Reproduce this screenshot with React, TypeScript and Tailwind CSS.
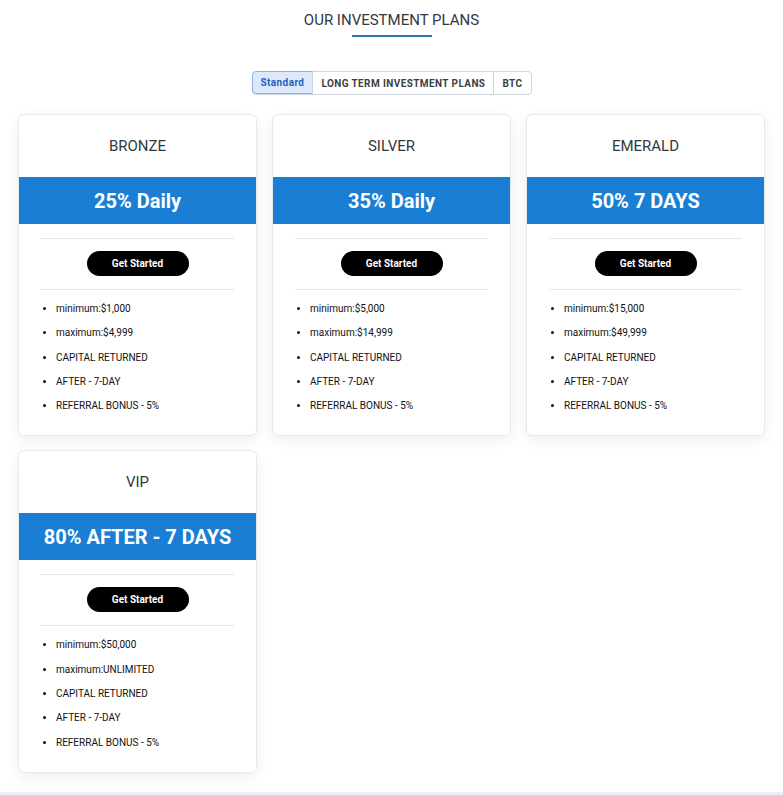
import { useState } from "react";

interface Plan {
  name: string;
  rate: string;
  min: string;
  max: string;
}

const plans: Plan[] = [
  { name: "BRONZE", rate: "25% Daily", min: "$1,000", max: "$4,999" },
  { name: "SILVER", rate: "35% Daily", min: "$5,000", max: "$14,999" },
  { name: "EMERALD", rate: "50% 7 DAYS", min: "$15,000", max: "$49,999" },
  { name: "VIP", rate: "80% AFTER - 7 DAYS", min: "$50,000", max: "UNLIMITED" },
];

const tabs = ["Standard", "LONG TERM INVESTMENT PLANS", "BTC"];

function PlanCard({ plan }: { plan: Plan }) {
  return (
    <div className="rounded-md border border-[#e6e9ee] bg-white shadow-[0_4px_14px_rgba(0,0,0,0.07)] pb-[17px]">
      <h3 className="h-[62px] flex items-center justify-center text-[15px] text-[#333840]">
        {plan.name}
      </h3>
      <div className="h-[47px] bg-[#1a7fd4] flex items-center justify-center text-white text-[20px] font-bold">
        {plan.rate}
      </div>
      <div className="mx-[22px] mt-[14px] border-t border-[#e4e6ea]" />
      <div className="flex justify-center pt-[12px] pb-[13px]">
        <button className="w-[102px] h-[25px] rounded-full bg-black text-white text-[10px] font-bold">
          Get Started
        </button>
      </div>
      <div className="mx-[22px] border-t border-[#e4e6ea]" />
      <ul className="list-disc pl-[37px] pt-[7px] text-[10px] text-[#111] leading-[24.3px]">
        <li>minimum:{plan.min}</li>
        <li>maximum:{plan.max}</li>
        <li>CAPITAL RETURNED</li>
        <li>AFTER - 7-DAY</li>
        <li>REFERRAL BONUS - 5%</li>
      </ul>
    </div>
  );
}

export default function App() {
  const [active, setActive] = useState(0);
  return (
    <div className="min-h-[795px] bg-white font-['Roboto',sans-serif] flex flex-col">
      <div className="flex-1">
        <div className="pt-[11px] flex flex-col items-center">
          <h2 className="text-[15px] text-[#333840] leading-[18px]">OUR INVESTMENT PLANS</h2>
          <div className="mt-[6px] w-[80px] h-[2px] bg-[#2a79ad]" />
        </div>
        <div className="mt-[34px] flex justify-center">
          <div className="flex rounded border border-[#cfd6df] bg-white">
            {tabs.map((t, i) => (
              <button
                key={t}
                onClick={() => setActive(i)}
                className={
                  i === active
                    ? "h-[23px] px-[8px] text-[10px] font-bold text-[#1f5fbf] bg-[#dde9fb] border border-[#8fb3e6] rounded-l -m-px tracking-[0.4px]"
                    : "h-[22px] px-[8px] text-[10px] font-bold text-[#3b3f46] border-l border-[#cfd6df] tracking-[0.4px]"
                }
              >
                {t}
              </button>
            ))}
          </div>
        </div>
        <div className="mt-[19px] px-[18px] grid grid-cols-3 gap-x-[15px] gap-y-[14px] items-start">
          {plans.map((p) => (
            <PlanCard key={p.name} plan={p} />
          ))}
        </div>
      </div>
      <div className="h-[5px] bg-[#eceff3] mt-[19px]" />
    </div>
  );
}
